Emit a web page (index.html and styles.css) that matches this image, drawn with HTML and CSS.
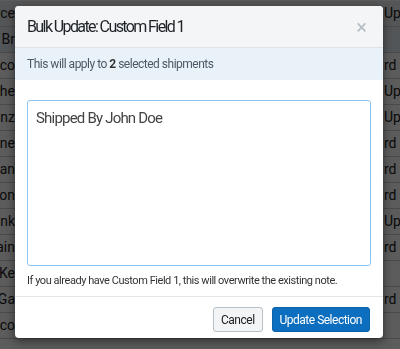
FILE: index.html
```html
<!DOCTYPE html>
<html lang="en">
<head>
    <meta charset="UTF-8">
    <meta name="viewport" content="width=device-width, initial-scale=1.0">
    <title>Bulk Update</title>
    <link rel="stylesheet" href="styles.css">
</head>
<body>
    <!-- shipments table behind the modal -->
    <div class="page">
        <div class="row row-head"><span class="c1">Joyce</span><span class="c2">Up (Store)</span></div>
        <div class="row row-sel"><span class="c1">Ana Br</span><span class="c2"></span></div>
        <div class="row"><span class="c1">Checo</span><span class="c2">rd Shipping</span></div>
        <div class="row"><span class="c1">Stephe</span><span class="c2">Up (Store)</span></div>
        <div class="row"><span class="c1">Franz</span><span class="c2">Up (Store)</span></div>
        <div class="row"><span class="c1">Agne</span><span class="c2">rd Shipping</span></div>
        <div class="row"><span class="c1">Evan</span><span class="c2">rd Shipping</span></div>
        <div class="row"><span class="c1">Thon</span><span class="c2">rd Shipping</span></div>
        <div class="row"><span class="c1">Johnk</span><span class="c2">Up (Store)</span></div>
        <div class="row"><span class="c1">Main</span><span class="c2">rd Shipping</span></div>
        <div class="row"><span class="c1">Paul Ke</span><span class="c2"></span></div>
        <div class="row"><span class="c1">Joe Ga</span><span class="c2">rd Shipping</span></div>
        <div class="row"><span class="c1">Checo</span><span class="c2"></span></div>
        <div class="row"><span class="c1"></span><span class="c2"></span></div>
    </div>

    <div class="backdrop"></div>

    <div class="modal">
        <div class="modal-header">
            <h2>Bulk Update: Custom Field 1</h2>
            <span class="close">&times;</span>
        </div>
        <div class="modal-info">
            This will apply to <strong>2</strong> selected shipments
        </div>
        <div class="modal-body">
            <textarea class="note">Shipped By John Doe</textarea>
            <p class="help">If you already have Custom Field 1, this will overwrite the existing note.</p>
        </div>
        <div class="modal-footer">
            <button type="button" class="btn btn-default">Cancel</button>
            <button type="button" class="btn btn-primary">Update Selection</button>
        </div>
    </div>
</body>
</html>
```

FILE: styles.css
```css
body {
    margin: 0;
    padding: 0;
    font-family: Roboto, "Liberation Sans", Arial, sans-serif;
    color: #222;
    overflow: hidden;
}

.page {
    background: #fff;
    padding-top: 1px;
}

.row {
    display: flex;
    height: 25px;
    line-height: 25px;
    border-bottom: 1px solid #ccc;
    font-size: 14px;
    white-space: nowrap;
    overflow: hidden;
}

.row-head {
    background: #eceef0;
}

.row-sel {
    background: #e6edf4;
}

.c1 {
    width: 15px;
    flex: none;
    overflow: hidden;
    direction: rtl;
    text-align: right;
    margin-right: 369px;
}

.c2 {
    flex: none;
    white-space: nowrap;
}

.backdrop {
    position: fixed;
    top: 0;
    left: 0;
    right: 0;
    bottom: 0;
    background: rgba(0, 0, 0, 0.64);
}

.modal {
    position: fixed;
    top: 6px;
    left: 15px;
    width: 368px;
    background: #fff;
    border-radius: 4px;
    box-shadow: 0 3px 10px rgba(0, 0, 0, 0.5);
    overflow: hidden;
}

.modal-header {
    display: flex;
    align-items: center;
    justify-content: space-between;
    height: 41px;
    padding: 0 16px 0 12px;
    background: #f3f5f7;
    border-bottom: 1px solid #dfe3e7;
}

.modal-header h2 {
    margin: 0;
    font-size: 16px;
    letter-spacing: -1.6px;
    font-weight: normal;
    color: #1f2327;
}

.close {
    font-size: 20px;
    color: #b5bcc2;
    line-height: 1;
}

.modal-info {
    height: 32px;
    line-height: 32px;
    padding: 0 12px;
    background: #eaf2f9;
    font-size: 12px;
    letter-spacing: -0.5px;
    color: #4d5863;
}

.modal-info strong {
    color: #333;
}

.modal-body {
    padding: 20px 12px 0;
    border-bottom: 1px solid #e3e6e9;
}

.note {
    display: block;
    box-sizing: border-box;
    width: 100%;
    height: 166px;
    padding: 8px 8px;
    border: 1px solid #8cc4f2;
    border-radius: 3px;
    font-family: inherit;
    font-size: 15px;
    letter-spacing: -0.8px;
    color: #444;
    resize: none;
    outline: none;
}

.help {
    margin: 0;
    padding: 6px 0 6px;
    font-size: 11px;
    letter-spacing: -0.45px;
    line-height: 18px;
    color: #333;
    white-space: nowrap;
}

.modal-footer {
    display: flex;
    justify-content: flex-end;
    gap: 9px;
    padding: 10px 13px 6px;
}

.btn {
    height: 25px;
    padding: 0 7px;
    border-radius: 3px;
    font-family: inherit;
    font-size: 12px;
    letter-spacing: -0.5px;
    cursor: pointer;
}

.btn-default {
    background: #f2f4f6;
    border: 1px solid #b8c0c7;
    color: #222;
}

.btn-primary {
    background: #0b6ebf;
    border: 1px solid #0a62a9;
    color: #fff;
}
```
